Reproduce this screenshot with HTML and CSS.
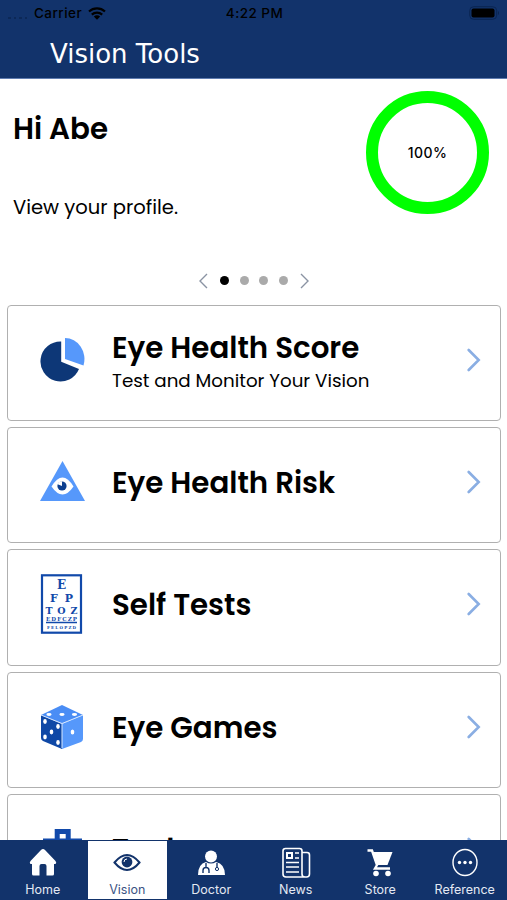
FILE: index.html
```html
<!DOCTYPE html>
<html lang="en">
<head>
<meta charset="utf-8">
<title>Vision Tools</title>
<link rel="stylesheet" href="styles.css">
</head>
<body>
<div class="app">
  <header class="header">
    <div class="status">
      <div class="carrier"><span class="signal"><i></i><i></i><i></i><i></i></span><span>Carrier</span>
        <svg class="wifi" width="20" height="13" viewBox="0 0 18 13"><path d="M1 4.5a12 12 0 0 1 16 0M3.8 7.6a7.6 7.6 0 0 1 10.4 0" fill="none" stroke="#000" stroke-width="2.2"/><path d="M5.8 9.6a4.8 4.8 0 0 1 6.4 0L9 12.8z"/></svg>
      </div>
      <div class="time">4:22 PM</div>
      <svg class="battery" width="32" height="14" viewBox="0 0 32 14"><rect x=".7" y=".7" width="27" height="12.6" rx="4" fill="none" stroke="#0a2552"/><rect x="2.5" y="2.5" width="23" height="9" rx="2"/><path d="M29.5 5.5v3" stroke="#0a2552"/></svg>
    </div>
    <h1 class="title">Vision Tools</h1>
  </header>
  <section class="profile">
    <div class="hello">
      <h2 class="greeting">Hi Abe</h2>
      <p class="view">View your profile.</p>
    </div>
    <div class="ring">100%</div>
  </section>
  <div class="pager">
    <svg width="9" height="16" viewBox="0 0 9 16"><path d="M8 1L1 8l7 7" fill="none" stroke="#8a93a3" stroke-width="1.4"/></svg>
    <div class="dots"><i class="dot dot-on"></i><i class="dot"></i><i class="dot"></i><i class="dot"></i></div>
    <svg width="9" height="16" viewBox="0 0 9 16"><path d="M1 1l7 7-7 7" fill="none" stroke="#8a93a3" stroke-width="1.4"/></svg>
  </div>
  <main class="list">
    <article class="card">
      <svg class="icon" width="46" height="46" viewBox="0 0 46 46"><path d="M21.200 4.500v20.300L39 32A20 20 0 1 1 21.200 4.500z" fill="#0d3777"/><path d="M25 1a19.5 21 0 0 1 18.500 27.500L25 22z" fill="#5698fb"/></svg>
      <div class="words"><h3 class="name">Eye Health Score</h3><p class="sub">Test and Monitor Your Vision</p></div>
      <svg class="chev" width="14" height="24" viewBox="0 0 14 24"><path d="M1.700 2l10 10-10 10" /></svg>
    </article>
    <article class="card">
      <svg class="icon" width="46" height="46" viewBox="0 0 46 46"><path d="M22.500 2L45 42H0z" fill="#5698fb"/><path d="M11.500 27.500q11-18 22 0q-11 16-22 0z" fill="#fff"/><circle cx="22" cy="27" r="4.600" fill="#0d3f8f"/><path d="M22 27v-4.800a4.800 4.800 0 0 0-4.400 3z" fill="#fff"/></svg>
      <div class="words"><h3 class="name">Eye Health Risk</h3></div>
      <svg class="chev" width="14" height="24" viewBox="0 0 14 24"><path d="M1.700 2l10 10-10 10" /></svg>
    </article>
    <article class="card">
      <svg class="icon" width="46" height="60" viewBox="0 0 46 60"><rect x="2" y="1.300" width="39" height="57.400" fill="#fff" stroke="#1149aa" stroke-width="2.200"/><g class="chart"><text x="21.500" y="14.500" font-size="12">E</text><text x="14" y="28" font-size="11">F</text><text x="29" y="28" font-size="11">P</text><text x="9" y="39.500" font-size="9.500">T</text><text x="21.500" y="39.500" font-size="9.500">O</text><text x="34" y="39.500" font-size="9.500">Z</text><text x="21.500" y="46.700" font-size="5.500" textLength="31">EDFCZP</text><text x="21.500" y="55" font-size="4" textLength="29">FELOPZD</text></g><path d="M6 48.500h31" stroke="#1149aa" stroke-width="1.500"/></svg>
      <div class="words"><h3 class="name">Self Tests</h3></div>
      <svg class="chev" width="14" height="24" viewBox="0 0 14 24"><path d="M1.700 2l10 10-10 10" /></svg>
    </article>
    <article class="card">
      <svg class="icon" width="46" height="46" viewBox="0 0 46 46"><path d="M1 11L22 1l21 10-21 9z" fill="#4a8df5"/><path d="M1 11l21 9v25L3 37q-2-1-2-3z" fill="#0f48a6"/><path d="M22 20l21-9v24q0 2-2 3l-19 7z" fill="#5698fb"/><path d="M1 11l21 8.500L43 11M22 19.500V44" fill="none" stroke="#d7e7ff"/><g fill="#fff"><ellipse cx="9" cy="10.500" rx="2.600" ry="1.400"/><ellipse cx="22" cy="10.500" rx="2.600" ry="1.400"/><ellipse cx="34.500" cy="10.500" rx="2.600" ry="1.400"/><ellipse cx="5" cy="17.500" rx="1.800" ry="2.400"/><ellipse cx="18" cy="22.500" rx="1.800" ry="2.400"/><ellipse cx="11.500" cy="28" rx="1.800" ry="2.400"/><ellipse cx="5" cy="33" rx="1.800" ry="2.400"/><ellipse cx="18" cy="38.500" rx="1.800" ry="2.400"/><ellipse cx="32.500" cy="28" rx="1.800" ry="2.600"/></g></svg>
      <div class="words"><h3 class="name">Eye Games</h3></div>
      <svg class="chev" width="14" height="24" viewBox="0 0 14 24"><path d="M1.700 2l10 10-10 10" /></svg>
    </article>
    <article class="card">
      <svg class="icon" width="46" height="46" viewBox="0 0 46 46"><path d="M3 12.500h39V44H3z" fill="#1149aa"/><path d="M17.200 14V5.500h11V14" fill="none" stroke="#1149aa" stroke-width="5"/></svg>
      <div class="words"><h3 class="name">Tools</h3></div>
      <svg class="chev" width="14" height="24" viewBox="0 0 14 24"><path d="M1.700 2l10 10-10 10" /></svg>
    </article>
  </main>
  <nav class="tabs">
    <div class="tab"><svg width="28" height="30" viewBox="0 0 28 30"><path d="M14 1q-1 0-2 1L1.500 13q-1.500 2 0 3H3v10q0 1.500 1.500 1.500h6V18q0-2 2-2h3q2 0 2 2v9.500h6q1.500 0 1.500-1.500V16h1.500q1.500-1 0-3L16 2q-1-1-2-1z" fill="#fff"/></svg><span>Home</span></div>
    <div class="tab tab-on"><svg width="28" height="30" viewBox="0 0 28 30"><path d="M1.500 14.500Q14-.5 26.500 14.500 14 29.500 1.500 14.500z" fill="none" stroke="#12336b" stroke-width="2"/><circle cx="14" cy="14" r="5.400" fill="#12336b"/><path d="M11 14a3 3 0 0 1 3-3" fill="none" stroke="#fff"/></svg><span>Vision</span></div>
    <div class="tab"><svg width="28" height="30" viewBox="0 0 28 30"><circle cx="14" cy="8.500" r="6" fill="#fff"/><path d="M1 27q0-11 8-13 5 3 10 0 9 2 9 13z" fill="#fff"/><path d="M9 15v4M6 25v-2.500a3 3 0 0 1 6 0V25M20 15v5" fill="none" stroke="#12336b" stroke-width="1.400"/><circle cx="20" cy="21" r="1.600" fill="#fff" stroke="#12336b"/></svg><span>Doctor</span></div>
    <div class="tab"><svg width="30" height="32" viewBox="0 0 30 32" fill="none" stroke="#fff" stroke-width="1.600"><path d="M21 27V4q0-2.500-2.500-2.500h-14Q2 1.500 2 4v23q0 3 3 3h20.500q3 0 3-3V8q0-2.500-2.500-2.500h-5M21 27q0 3 3 3M5 15.500h13M5 20h13M5 25h13M14 6h4M14 11h4"/><path d="M6 6h5v5H6z" stroke-width="2"/></svg><span>News</span></div>
    <div class="tab"><svg width="28" height="30" viewBox="0 0 28 30"><path d="M1.500 2.500h4.500l5 14.500-2 3.500h15" fill="none" stroke="#fff" stroke-width="2.400"/><path d="M6 4h20.500l-5 13H11z" fill="#fff"/><circle cx="10" cy="25.500" r="2.800" fill="#fff"/><circle cx="22" cy="25.500" r="2.800" fill="#fff"/></svg><span>Store</span></div>
    <div class="tab"><svg width="28" height="30" viewBox="0 0 28 30"><ellipse cx="14" cy="14.500" rx="12" ry="13" fill="none" stroke="#fff" stroke-width="1.400"/><g fill="#fff"><circle cx="8.500" cy="14.500" r="1.700"/><circle cx="14" cy="14.500" r="1.700"/><circle cx="19.500" cy="14.500" r="1.700"/></g></svg><span>Reference</span></div>
  </nav>
</div>
</body>
</html>
```
FILE: styles.css
```css
* { box-sizing: border-box; }
body { margin: 0; background: #fff; font-family: Poppins, Inter, sans-serif; color: #000; }
h1, h2, h3, p { margin: 0; white-space: nowrap; }
.app { width: 507px; height: 900px; display: flex; flex-direction: column; overflow: hidden; }
.header { height: 79px; flex: none; background: #12336b; border-bottom: 1px solid #5f7cb0; }
.status { display: grid; grid-template-columns: 1fr 80px 1fr; align-items: center; height: 26px; padding: 0 6px 0 8px; font: 500 13.500px Inter, sans-serif; letter-spacing: .45px; }
.carrier { display: flex; align-items: center; gap: 5px; }
.signal { display: flex; gap: 3px; align-self: flex-end; padding-bottom: 2px; width: 21px; }
.signal i { width: 2.500px; height: 2px; background: #0c2857; }
.time { text-align: center; }
.battery { justify-self: end; }
.title { margin: 12px 0 0 50px; color: #fff; font: 400 26px/32px "DejaVu Sans", sans-serif; }
.profile { height: 183px; flex: none; display: flex; justify-content: space-between; padding: 12px 18px 0 13px; }
.greeting { font-size: 29.300px; font-weight: 600; line-height: 36px; margin-top: 20px; }
.view { font-size: 19.550px; line-height: 28px; margin-top: 46px; }
.ring { width: 123px; height: 123px; border: 12.500px solid #0f0; border-radius: 50%; display: flex; align-items: center; justify-content: center; font: 500 14px Inter, sans-serif; letter-spacing: .4px; }
.pager { height: 43px; flex: none; display: flex; justify-content: center; align-items: center; gap: 12px; padding: 0 0 6px 1px; }
.dots { display: flex; gap: 10.700px; }
.dot { width: 9px; height: 9px; border-radius: 50%; background: #aaa; }
.dot-on { background: #000; }
.list { flex: 1; min-height: 0; overflow: hidden; display: flex; flex-direction: column; gap: 6px; padding: 0 6px 0 7px; }
.card { height: 116.200px; flex: none; border: 1px solid #b0b0b0; border-radius: 4px; display: flex; align-items: center; padding: 0 19px 6px 32px; }
.icon { width: 46px; flex: none; }
.words { flex: 1; margin-left: 26px; padding-top: 2px; }
.words:has(.sub) { padding-top: 4px; }
.name { font-size: 29.300px; font-weight: 600; line-height: 34px; }
.sub { font-size: 18.300px; line-height: 26px; margin-top: 3px; }
.chev { flex: none; fill: none; stroke: #8aaee3; stroke-width: 2.600; stroke-linecap: round; }
.chart { fill: #1149aa; font-family: "DejaVu Serif", serif; font-weight: 700; text-anchor: middle; }
.tabs { height: 60px; flex: none; background: #12336b; display: grid; grid-template-columns: repeat(6, 1fr); }
.tab { display: flex; flex-direction: column; align-items: center; color: #e4e9f3; font: 400 12.500px/16px Inter, sans-serif; padding-top: 7px; }
.tab:first-child { padding-left: 1px; }
.tab svg { height: 32px; margin-bottom: 3px; }
.tab-on { background: #fff; color: #3a5483; margin: 1px 2px 1px 3px; padding-top: 6px; }
```
